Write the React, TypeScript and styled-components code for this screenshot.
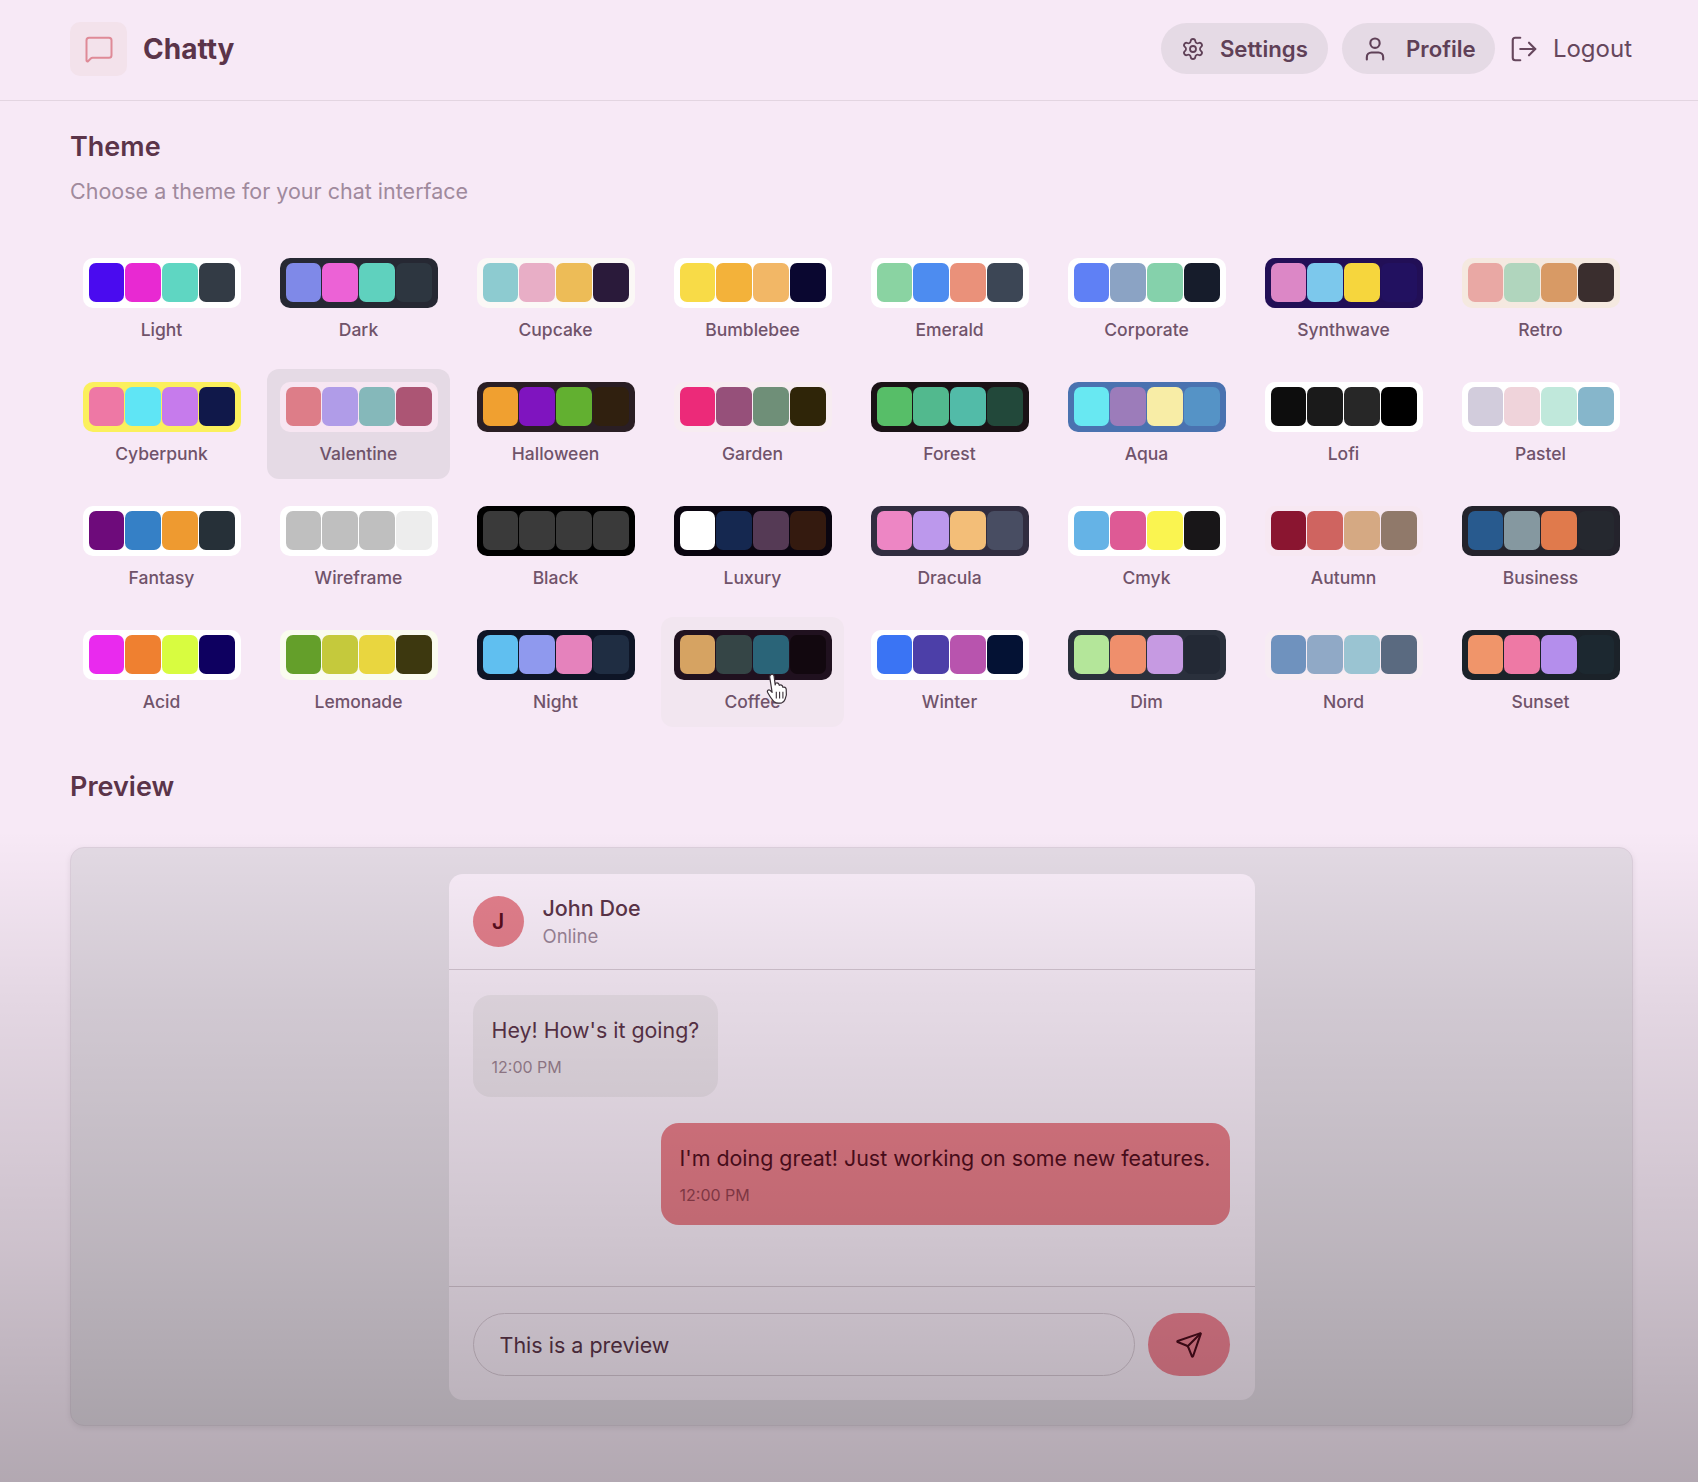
import React from "react";
import styled, { createGlobalStyle } from "styled-components";
import { LogOut, MessageSquare, Send, Settings, User } from "lucide-react";

const Global = createGlobalStyle`
  html, body { margin: 0; padding: 0; background: #f7e9f6; }
  * { box-sizing: border-box; }
  body { font-family: Inter, "Liberation Sans", sans-serif; color: #5b3449; }
`;

const Page = styled.div`
  position: relative;
  width: 1698px;
  height: 1482px;
  overflow: hidden;
  background: #f7e9f6;
`;

const Fade = styled.div`
  position: absolute;
  inset: 0;
  pointer-events: none;
  background: linear-gradient(
    to bottom,
    rgba(0, 0, 0, 0) 0%,
    rgba(0, 0, 0, 0) 56%,
    rgba(0, 0, 0, 0.08) 67.5%,
    rgba(0, 0, 0, 0.17) 83.7%,
    rgba(0, 0, 0, 0.28) 100%
  );
`;

const Header = styled.header`
  height: 101px;
  padding: 0 66px 3px 70px;
  border-bottom: 1px solid #e3d5e1;
  display: flex;
  align-items: center;
  justify-content: space-between;
`;

const Brand = styled.div`
  display: flex;
  align-items: center;
  gap: 16px;
`;

const LogoBox = styled.div`
  width: 57px;
  height: 54px;
  border-radius: 10px;
  background: #f3e2eb;
  color: #df8a97;
  display: flex;
  align-items: center;
  justify-content: center;
`;

const BrandName = styled.h1`
  margin: 0;
  font-size: 28px;
  line-height: 36px;
  font-weight: 700;
  color: #5b3449;
`;

const Nav = styled.nav`
  display: flex;
  align-items: center;
  gap: 14px;
`;

const NavPill = styled.button`
  height: 51px;
  width: ${(p) => p.$w}px;
  border: 0;
  border-radius: 26px;
  background: #e5dae5;
  color: #5f4057;
  display: flex;
  align-items: center;
  justify-content: center;
  gap: ${(p) => p.$gap}px;
  font: 600 22.2px/28px Inter, "Liberation Sans", sans-serif;
`;

const LogoutLink = styled.a`
  display: flex;
  align-items: center;
  gap: 14px;
  color: #66475d;
  font-size: 24px;
  line-height: 32px;
  font-weight: 400;
`;

const Main = styled.main`
  padding: 0 66px 0 70px;
`;

const SectionTitle = styled.h2`
  margin: ${(p) => p.$top}px 0 0;
  font-size: 27px;
  line-height: 32px;
  font-weight: 600;
  color: #5b3449;
`;

const Subtitle = styled.p`
  margin: 14px 0 0;
  font-size: 21.5px;
  line-height: 28px;
  color: #a08a9d;
`;

const Grid = styled.div`
  margin-top: 40px;
  display: grid;
  grid-template-columns: repeat(8, 183px);
  grid-auto-rows: 110px;
  column-gap: 14px;
  row-gap: 14px;
`;

const ThemeButton = styled.button`
  position: relative;
  border: 0;
  padding: 13px 12.5px 0;
  border-radius: 12px;
  background: ${(p) => (p.$state === "active" ? "#e5dae5" : p.$state === "hover" ? "#f2e6f0" : "transparent")};
  display: flex;
  flex-direction: column;
  align-items: stretch;
  gap: 10px;
  font-family: inherit;
`;

const Swatch = styled.div`
  height: 50px;
  padding: 5px 6px 6px;
  border-radius: 10px;
  background: ${(p) => p.$bg};
  display: grid;
  grid-template-columns: repeat(4, 1fr);
  gap: 1.5px;
`;

const Chip = styled.div`
  border-radius: 7px;
  background: ${(p) => p.$c};
`;

const ThemeLabel = styled.span`
  font-size: 17.5px;
  line-height: 24px;
  font-weight: 500;
  text-align: center;
  color: #70536a;
`;

const Cursor = styled.svg`
  position: absolute;
  left: 103px;
  top: 55px;
  width: 29px;
  height: 33px;
`;

const Panel = styled.section`
  margin-top: 44px;
  width: 1563px;
  height: 579px;
  padding: 27px 0 0;
  border-radius: 14px;
  border: 1px solid #dccfdc;
  background: #e3dae4;
  box-shadow: 0 2px 6px rgba(0, 0, 0, 0.08);
`;

const ChatCard = styled.div`
  width: 806px;
  height: 526px;
  margin: -1px auto 0;
  border-radius: 14px;
  background: #f8ecf8;
  overflow: hidden;
  display: flex;
  flex-direction: column;
`;

const ChatHeader = styled.div`
  height: 96px;
  padding: 22px 24px 0;
  border-bottom: 1px solid #d5c6d2;
  display: flex;
  align-items: flex-start;
  gap: 19px;
`;

const Avatar = styled.div`
  width: 51px;
  height: 51px;
  border-radius: 50%;
  background: #e37f8c;
  color: #5a0d1d;
  display: flex;
  align-items: center;
  justify-content: center;
  font-size: 21px;
  font-weight: 600;
`;

const PersonText = styled.div`
  margin-top: -1px;
`;

const PersonName = styled.div`
  font-size: 21.5px;
  line-height: 26px;
  font-weight: 500;
  color: #5b3449;
`;

const PersonStatus = styled.div`
  margin-top: 3px;
  font-size: 18.5px;
  line-height: 24px;
  color: #9a8497;
`;

const Messages = styled.div`
  flex: 1;
  padding: 25px 25px 0 24px;
  display: flex;
  flex-direction: column;
  gap: 26px;
`;

const Bubble = styled.div`
  align-self: ${(p) => (p.$mine ? "flex-end" : "flex-start")};
  height: 102px;
  padding: 21px 19px 0;
  border-radius: 18px;
  background: ${(p) => (p.$mine ? "#e67d89" : "#ebe1ea")};
  color: ${(p) => (p.$mine ? "#520e1e" : "#5b3449")};
`;

const BubbleText = styled.div`
  font-size: 21.4px;
  line-height: 28px;
  white-space: nowrap;
`;

const BubbleTime = styled.div`
  margin-top: 13px;
  font-size: 16px;
  line-height: 20px;
  opacity: 0.55;
`;

const Composer = styled.div`
  height: 114px;
  padding: 26px 25px 0 24px;
  border-top: 1px solid #d5c6d2;
  display: flex;
  gap: 13px;
`;

const ComposerInput = styled.input`
  flex: 1;
  height: 63px;
  padding: 0 26px;
  border: 1px solid #d5c6d2;
  border-radius: 32px;
  background: transparent;
  color: #5b3449;
  font: 400 21.5px/28px Inter, "Liberation Sans", sans-serif;
  outline: none;
`;

const SendButton = styled.button`
  width: 82px;
  height: 63px;
  border: 0;
  border-radius: 32px;
  background: #ee8293;
  color: #4a0c1b;
  display: flex;
  align-items: center;
  justify-content: center;
`;

const themes: [string, string, string[]][] = [
  ["Light", "#ffffff", ["#4a0bef", "#e829d2", "#5fd6c2", "#333b45"]],
  ["Dark", "#262833", ["#7f89e8", "#ec62d6", "#5fd1be", "#2d3640"]],
  ["Cupcake", "#fbf8f6", ["#8dcbd0", "#e8aec6", "#edbc57", "#2a1a3a"]],
  ["Bumblebee", "#ffffff", ["#f8db47", "#f3b23a", "#f2b766", "#0a0730"]],
  ["Emerald", "#ffffff", ["#8ad3a2", "#4d8cf0", "#ea917a", "#3c4655"]],
  ["Corporate", "#ffffff", ["#5f80f5", "#8ba3c4", "#85d1ab", "#161c2b"]],
  ["Synthwave", "#220f56", ["#dc87c6", "#7cc8ec", "#f6d63d", "#221160"]],
  ["Retro", "#f5e9e0", ["#e9a8a4", "#b0d5bd", "#d89a65", "#3a2e2e"]],
  ["Cyberpunk", "#fbf05c", ["#ee78a5", "#5fe5f5", "#c67bec", "#10184a"]],
  ["Valentine", "#f7e6f2", ["#dd7d88", "#b09ce8", "#85b8ba", "#ac5574"]],
  ["Halloween", "#2a1e24", ["#f0a030", "#7f14bf", "#62b030", "#30200f"]],
  ["Garden", "#f7ecf1", ["#ec2a79", "#96507a", "#6f8f78", "#2f2508"]],
  ["Forest", "#1a1216", ["#57be68", "#52b98e", "#52bba8", "#22483a"]],
  ["Aqua", "#4a72b0", ["#68e8f2", "#9c7cba", "#f8eda6", "#5593c6"]],
  ["Lofi", "#ffffff", ["#0d0d0d", "#1a1a1a", "#272727", "#000000"]],
  ["Pastel", "#ffffff", ["#d2ccdc", "#efd3da", "#c0e8db", "#86b6cb"]],
  ["Fantasy", "#ffffff", ["#6e0b7b", "#3580c6", "#ee9a30", "#263038"]],
  ["Wireframe", "#ffffff", ["#bfbfbf", "#bfbfbf", "#bfbfbf", "#ededed"]],
  ["Black", "#000000", ["#3a3a3a", "#3a3a3a", "#3a3a3a", "#3a3a3a"]],
  ["Luxury", "#0a0510", ["#ffffff", "#152850", "#553a55", "#341a0f"]],
  ["Dracula", "#312d40", ["#ed86c4", "#bc98ec", "#f3be78", "#484d62"]],
  ["Cmyk", "#ffffff", ["#65b3e6", "#de5a95", "#faf450", "#181618"]],
  ["Autumn", "#f7e8f2", ["#8a1530", "#cf6460", "#d5a983", "#90796a"]],
  ["Business", "#24232c", ["#285a8e", "#8598a0", "#e07a4c", "#25282f"]],
  ["Acid", "#ffffff", ["#e92aee", "#ef8030", "#d8fc40", "#0e0060"]],
  ["Lemonade", "#fafbef", ["#649f2a", "#c5c93c", "#e9d63f", "#3d380f"]],
  ["Night", "#0e1526", ["#60bff0", "#8f99ee", "#e582bc", "#1f2d42"]],
  ["Coffee", "#20111f", ["#d6a362", "#354546", "#2a6478", "#12080f"]],
  ["Winter", "#ffffff", ["#3a74f4", "#4c3fa8", "#b854ae", "#041234"]],
  ["Dim", "#2a303c", ["#b4e69a", "#ef8f6c", "#c69ae2", "#232935"]],
  ["Nord", "#f7ecf3", ["#6f92be", "#90a9c6", "#9ac4d2", "#5a6a80"]],
  ["Sunset", "#1b2229", ["#f0956a", "#ee79a5", "#b48eec", "#1c2830"]],
];

const HandCursor = () => (
  <Cursor viewBox="0 0 26 30" fill="#ffffff" stroke="#3a3038" strokeWidth="1.1" strokeLinejoin="round">
    <path d="M6 2.5c1.2-1 2.8-.3 3 1.2l1 8 .3-1.4c1.6-.8 3 0 3.2 1.2l.2.6c1.4-.8 2.9 0 3.1 1.2l.2.6c1.4-.6 2.8.2 3 1.6.5 3.4.2 6.6-1 9.2-.6 1.6-1.6 2.6-3 3.3-2.6.6-5.3.4-7-.9-2.2-2.4-4.6-5.8-6-8.6-.7-1.6 1-2.9 2.4-1.8l1.8 1.7L5 4.6c-.1-.8.3-1.6 1-2.1z" />
    <path d="M11 18v6M14 18v6M17 18v6" fill="none" strokeWidth="1" />
  </Cursor>
);

export default function App() {
  return (
    <Page>
      <Global />
      <Header>
        <Brand>
          <LogoBox>
            <MessageSquare size={30} strokeWidth={1.6} />
          </LogoBox>
          <BrandName>Chatty</BrandName>
        </Brand>
        <Nav>
          <NavPill $w={167} $gap={15}>
            <Settings size={24} strokeWidth={1.8} />
            Settings
          </NavPill>
          <NavPill $w={153} $gap={17}>
            <User size={28} strokeWidth={1.8} />
            Profile
          </NavPill>
          <LogoutLink>
            <LogOut size={30} strokeWidth={1.7} />
            Logout
          </LogoutLink>
        </Nav>
      </Header>
      <Main>
        <SectionTitle $top={30}>Theme</SectionTitle>
        <Subtitle>Choose a theme for your chat interface</Subtitle>
        <Grid>
          {themes.map(([name, bg, colors]) => (
            <ThemeButton key={name} $state={name === "Valentine" ? "active" : name === "Coffee" ? "hover" : "idle"}>
              <Swatch $bg={bg}>
                {colors.map((c, i) => (
                  <Chip key={i} $c={c} />
                ))}
              </Swatch>
              <ThemeLabel>{name}</ThemeLabel>
              {name === "Coffee" && <HandCursor />}
            </ThemeButton>
          ))}
        </Grid>
        <SectionTitle $top={44}>Preview</SectionTitle>
        <Panel>
          <ChatCard>
            <ChatHeader>
              <Avatar>J</Avatar>
              <PersonText>
                <PersonName>John Doe</PersonName>
                <PersonStatus>Online</PersonStatus>
              </PersonText>
            </ChatHeader>
            <Messages>
              <Bubble>
                <BubbleText>Hey! How's it going?</BubbleText>
                <BubbleTime>12:00 PM</BubbleTime>
              </Bubble>
              <Bubble $mine>
                <BubbleText>I'm doing great! Just working on some new features.</BubbleText>
                <BubbleTime>12:00 PM</BubbleTime>
              </Bubble>
            </Messages>
            <Composer>
              <ComposerInput readOnly value="This is a preview" />
              <SendButton>
                <Send size={28} strokeWidth={1.8} />
              </SendButton>
            </Composer>
          </ChatCard>
        </Panel>
      </Main>
      <Fade />
    </Page>
  );
}
